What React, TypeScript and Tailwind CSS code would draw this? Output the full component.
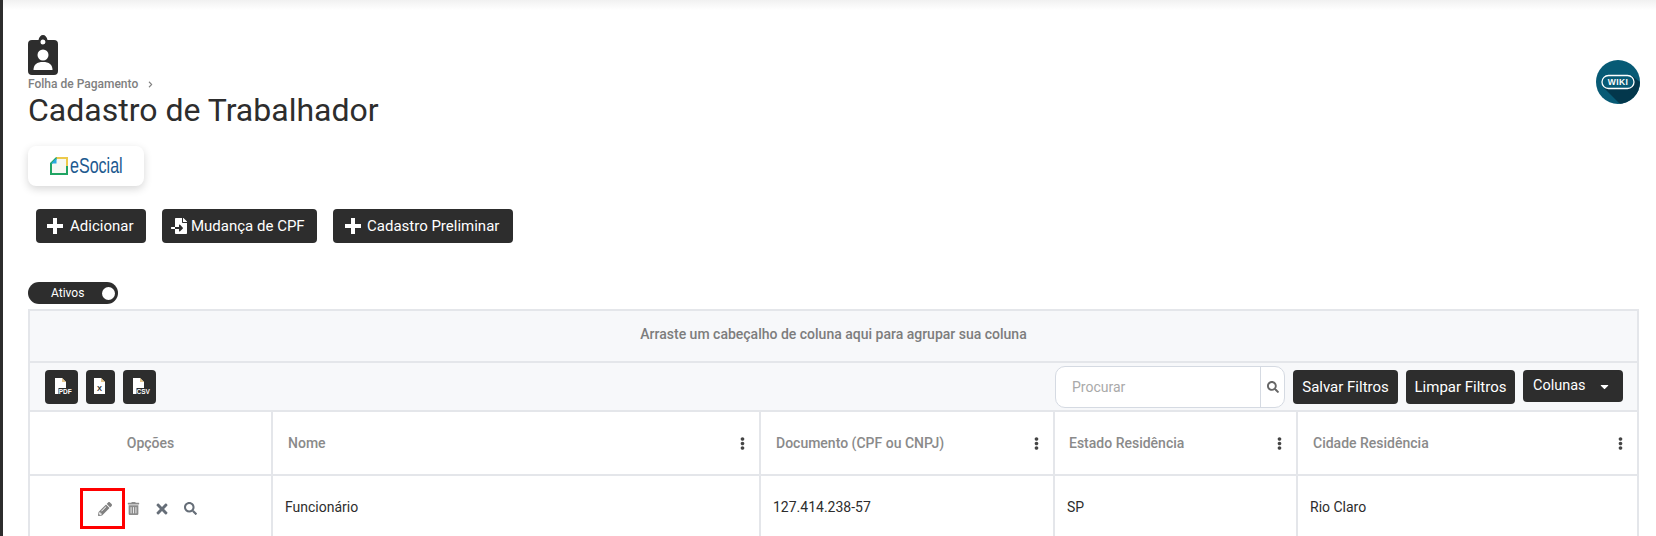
import { FaFileImport, FaPencilAlt, FaTrashAlt, FaTimes, FaSearch, FaCaretDown, FaEllipsisV, FaChevronRight } from "react-icons/fa";

const gridCols = "grid grid-cols-[243px_488px_294px_243px_1fr]";

function BadgeIcon() {
  return (
    <svg width="30" height="40" viewBox="0 0 30 40">
      <path fillRule="evenodd" fill="#2d2d2d" d="M4 5h6.500C11 2 12.800 0 15 0s4 2 4.500 5H26a4 4 0 0 1 4 4v27a4 4 0 0 1-4 4H4a4 4 0 0 1-4-4V9a4 4 0 0 1 4-4zM15 4.500a2.500 2.500 0 1 0 0 5a2.500 2.500 0 0 0 0-5z" />
      <circle cx="15" cy="20" r="5.500" fill="#fff" />
      <path fill="#fff" d="M5.500 35c0-5.500 3.500-8 9.500-8s9.500 2.500 9.500 8z" />
    </svg>
  );
}

function ESocialLogo() {
  return (
    <div className="flex items-center">
      <svg width="18" height="18" viewBox="0 0 18 18">
        <path d="M1 6.500 6.500 1H17v16H1z" fill="#f6f8f3" stroke="#1fa463" strokeWidth="2" />
        <path d="M6.500 1H17v8" fill="none" stroke="#ecc94b" strokeWidth="2" />
        <path d="M1 6.500 6.500 1v5.500z" fill="#29a9e0" />
      </svg>
      <span className="block w-[52px] ml-[2px] origin-left scale-x-[0.73] whitespace-nowrap font-['Liberation_Sans',sans-serif] text-[22px] leading-[22px] text-[#20598f]">eSocial</span>
    </div>
  );
}

function WikiIcon() {
  return (
    <svg width="44" height="44" viewBox="0 0 44 44">
      <defs>
        <clipPath id="wiki-clip"><circle cx="22" cy="22" r="22" /></clipPath>
      </defs>
      <circle cx="22" cy="22" r="22" fill="#075a75" />
      <path d="M8 28 24 44 44 44 44 22 36 16z" fill="#03374c" clipPath="url(#wiki-clip)" />
      <rect x="6" y="15.500" width="32" height="13" rx="6.500" fill="#075a75" stroke="#fff" strokeWidth="1.300" />
      <text x="22" y="25" textAnchor="middle" fontFamily="'Liberation Sans', sans-serif" fontWeight="700" fontSize="8.500" letterSpacing="0.4" fill="#fff">WIKI</text>
    </svg>
  );
}

function PlusIcon() {
  return (
    <svg width="16" height="16" viewBox="0 0 16 16" className="shrink-0">
      <path fill="#fff" d="M6 0h4v6h6v4h-6v6H6v-6H0V6h6z" />
    </svg>
  );
}

function FileBtn({ label, w }: { label: string; w: string }) {
  return (
    <button className={`${w} h-[34px] rounded-[4px] bg-[#2d2d2d] flex items-center justify-center`}>
      <svg width="22" height="20" viewBox="0 0 22 20" className="shrink-0">
        <path d="M4 1h7l4 4v12H4z" fill="#fff" />
        <path d="M11 1l4 4h-4z" fill="#e5c58a" />
        {label === "X" ? (
          <text x="9.500" y="14" textAnchor="middle" fontFamily="'Liberation Sans', sans-serif" fontWeight="700" fontSize="7.500" fill="#2d2d2d">X</text>
        ) : (
          <>
            <rect x="7.500" y="11" width="13.500" height="7" fill="#2d2d2d" />
            <text x="14.200" y="17" textAnchor="middle" fontFamily="'Liberation Sans', sans-serif" fontWeight="700" fontSize="6.500" fill="#fff">{label}</text>
          </>
        )}
      </svg>
    </button>
  );
}

function DarkBtn({ icon, text, className }: { icon: React.ReactNode; text: string; className: string }) {
  return (
    <button className={`h-[34px] rounded-[4px] bg-[#2d2d2d] text-white text-[15px] flex items-center ${className}`}>
      {icon}
      {text}
    </button>
  );
}

function HeaderCell({ title, center, pad }: { title: string; center?: boolean; pad?: string }) {
  return (
    <div className={`h-[62px] border-r-2 border-[#e4e6ea] last:border-r-0 flex items-center text-[14px] font-medium text-[#8a8a8a] ${center ? "justify-center" : "justify-between " + pad + " pr-[10px]"}`}>
      <span>{title}</span>
      {!center && <FaEllipsisV className="text-[#444] text-[13px]" />}
    </div>
  );
}

function BodyCell({ children }: { children: React.ReactNode }) {
  return (
    <div className="h-[60px] border-r-2 border-[#e4e6ea] last:border-r-0 text-[14px] text-[#2d2d2d] pt-[21px] pl-[12px]">
      {children}
    </div>
  );
}

export default function App() {
  return (
    <div className="h-[536px] w-[1656px] overflow-hidden bg-white border-l-[3px] border-[#2d2d2d] font-['Roboto',sans-serif]">
      <div className="h-[10px] bg-gradient-to-b from-[#f1f1f1] to-white" />

      <div className="pl-[25px] pr-[16px] pt-[25px]">
        <div className="flex justify-between items-start">
          <div>
            <BadgeIcon />
            <div className="flex items-center gap-[9px] text-[12px] leading-[16px] text-[#808080] font-medium mt-[1px]">
              <span>Folha de Pagamento</span>
              <FaChevronRight className="text-[7px]" />
            </div>
            <h1 className="text-[32px] leading-[36px] text-[#2d2d2d]">Cadastro de Trabalhador</h1>
          </div>
          <div className="mt-[25px]"><WikiIcon /></div>
        </div>

        <div className="w-[116px] h-[40px] mt-[18px] rounded-[8px] bg-white shadow-[0_3px_8px_rgba(0,0,0,0.16)] flex items-center justify-center">
          <ESocialLogo />
        </div>

        <div className="flex gap-[16px] mt-[23px] ml-[8px]">
          <DarkBtn className="w-[110px] pl-[11px] gap-[7px]" icon={<PlusIcon />} text="Adicionar" />
          <DarkBtn className="w-[155px] pl-[9px] gap-[4px]" icon={<FaFileImport className="text-[16px]" />} text="Mudança de CPF" />
          <DarkBtn className="w-[180px] pl-[12px] gap-[6px]" icon={<PlusIcon />} text="Cadastro Preliminar" />
        </div>

        <div className="w-[90px] h-[22px] mt-[39px] rounded-full bg-[#2d2d2d] flex items-center justify-between pl-[23px] pr-[2px] text-white text-[12px]">
          <span>Ativos</span>
          <span className="w-[13px] h-[13px] mr-[1px] rounded-full bg-white" />
        </div>

        <div className="w-[1611px] mt-[5px] border-2 border-[#e4e6ea] border-b-0">
          <div className="h-[52px] pb-[4px] bg-[#f7f8fa] border-b-2 border-[#e4e6ea] flex items-center justify-center text-[14px] font-medium text-[#7d7d7d]">
            Arraste um cabeçalho de coluna aqui para agrupar sua coluna
          </div>

          <div className="h-[49px] pt-[1px] bg-[#f7f8fa] border-b-2 border-[#e4e6ea] flex items-center justify-between pl-[15px] pr-[14px]">
            <div className="flex gap-[8px]">
              <FileBtn label="PDF" w="w-[33px]" />
              <FileBtn label="X" w="w-[29px]" />
              <FileBtn label="CSV" w="w-[33px]" />
            </div>
            <div className="flex items-center gap-[8px]">
              <div className="w-[230px] h-[42px] rounded-[10px] border border-[#d5dae2] bg-white flex items-center text-[14px] text-[#a9a9a9]">
                <span className="flex-1 pl-[16px]">Procurar</span>
                <span className="w-[24px] h-full border-l border-[#d5dae2] flex items-center justify-center">
                  <FaSearch className="text-[12px] text-[#666]" />
                </span>
              </div>
              <button className="w-[105px] h-[34px] rounded-[4px] bg-[#2d2d2d] text-white text-[15px]">Salvar Filtros</button>
              <button className="w-[109px] h-[34px] rounded-[4px] bg-[#2d2d2d] text-white text-[15px]">Limpar Filtros</button>
              <button className="w-[100px] h-[32px] mb-[2px] rounded-[4px] bg-[#2d2d2d] text-white text-[14.500px] flex items-center justify-between pl-[10px] pr-[12px]">
                Colunas
                <FaCaretDown className="text-[13px]" />
              </button>
            </div>
          </div>

          <div className={`${gridCols} border-b-2 border-[#e4e6ea] h-[64px]`}>
            <HeaderCell title="Opções" center />
            <HeaderCell title="Nome" pad="pl-[15px]" />
            <HeaderCell title="Documento (CPF ou CNPJ)" pad="pl-[15px]" />
            <HeaderCell title="Estado Residência" pad="pl-[14px]" />
            <HeaderCell title="Cidade Residência" pad="pl-[15px]" />
          </div>

          <div className={gridCols}>
            <div className="h-[60px] border-r-2 border-[#e4e6ea] flex items-start pt-[12px] pl-[50px]">
              <div className="w-[45px] h-[41px] border-[3px] border-[#ff0000] flex items-center justify-end pr-[10px] text-[#808080]">
                <FaPencilAlt className="text-[14px]" />
              </div>
              <div className="flex items-center h-[41px]">
                <FaTrashAlt className="text-[13px] ml-[2px] text-[#8c8c8c]" />
                <FaTimes className="text-[16px] ml-[14px] text-[#666e78]" />
                <FaSearch className="text-[13px] ml-[14px] text-[#666e78]" />
              </div>
            </div>
            <BodyCell>Funcionário</BodyCell>
            <BodyCell>127.414.238-57</BodyCell>
            <BodyCell>SP</BodyCell>
            <BodyCell>Rio Claro</BodyCell>
          </div>
        </div>
      </div>
    </div>
  );
}
